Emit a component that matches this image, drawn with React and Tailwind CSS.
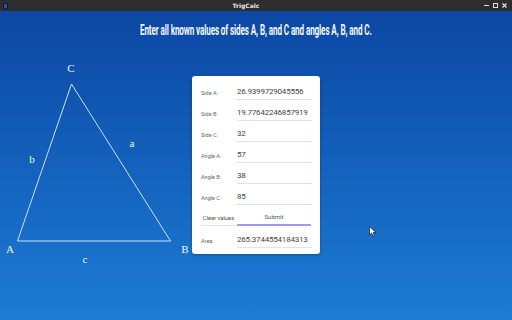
import React from "react";

const rows = [
  ["Side A:", "26.9399729045556"],
  ["Side B:", "19.77642246857919"],
  ["Side C:", "32"],
  ["Angle A:", "57"],
  ["Angle B:", "38"],
  ["Angle C:", "85"],
];

function Row({ label, value }) {
  return (
    <div className="flex items-end h-[21px]">
      <div className="w-[36px] text-[5.5px] leading-[7px] pb-[3px] text-[#666] whitespace-nowrap">{label}</div>
      <div className="w-[75px] border-b border-[#e3e3e3] text-[8px] leading-[10px] pb-[2px] text-[#444] tracking-[-0.2px] whitespace-nowrap overflow-hidden">{value}</div>
    </div>
  );
}

export default function App() {
  return (
    <div className="w-[512px] h-[320px] flex flex-col overflow-hidden" style={{ fontFamily: 'Roboto, "Noto Sans", sans-serif' }}>
      <div className="h-[11px] bg-[#2d2d2d] flex items-center px-[3px] relative">
        <div className="w-[5px] h-[6px] rounded-[1px] bg-[#1e4fbf] border border-[#101828]"></div>
        <div className="flex-1 text-center text-[6px] leading-[11px] font-bold text-[#e8e8e8]" style={{ fontFamily: '"DejaVu Sans", sans-serif' }}>TrigCalc</div>
        <div className="flex items-center gap-[4px] pr-[2px]">
          <div className="w-[5px] h-[5px] flex items-center"><div className="w-[5px] h-[1.5px] bg-[#ddd]"></div></div>
          <div className="w-[5px] h-[5px] border-[1.5px] border-[#ddd]"></div>
          <svg width="5" height="5" viewBox="0 0 5 5"><path d="M0.5 0.5L4.5 4.5M4.5 0.5L0.5 4.5" stroke="#ddd" strokeWidth="1.3" /></svg>
        </div>
      </div>
      <div className="flex-1 flex flex-col bg-gradient-to-b from-[#0c47a3] to-[#1d7cd5]">
        <div className="h-[49px] pt-[11px] flex justify-center">
          <div className="text-[14px] leading-[16px] font-bold text-[#f4f6fb] whitespace-nowrap scale-x-[0.58] tracking-[-0.2px]" style={{ fontFamily: 'Roboto, sans-serif' }}>
            Enter all known values of sides A, B, and C and angles A, B, and C.
          </div>
        </div>
        <div className="flex items-start">
          <svg width="192" height="210" viewBox="0 0 192 210" className="shrink-0" style={{ fontFamily: '"Liberation Serif", serif' }}>
            <path d="M17.5 181 L71.5 24 L170.5 181 Z" fill="none" stroke="#cfe0f7" strokeWidth="1" />
            <g fill="#f2f6fc" fontSize="11">
              <text x="71" y="12" textAnchor="middle">C</text>
              <text x="10" y="193" textAnchor="middle">A</text>
              <text x="185" y="193" textAnchor="middle">B</text>
              <text x="132" y="87" textAnchor="middle">a</text>
              <text x="32" y="103" textAnchor="middle">b</text>
              <text x="85" y="203" textAnchor="middle">c</text>
            </g>
          </svg>
          <div className="mt-[16px] w-[128px] h-[178px] bg-white rounded-[3px] shadow-[0_1px_3px_rgba(0,0,0,0.3)] pl-[9px] pr-[8px] pt-[3px] flex flex-col">
            {rows.map(([l, v]) => (
              <Row key={l} label={l} value={v} />
            ))}
            <div className="flex items-end h-[21px]">
              <div className="w-[35px] mr-[1px] border-b border-[#e3e3e3] text-[6px] leading-[8px] pb-[3px] text-[#555] text-center whitespace-nowrap tracking-[-0.1px]">Clear values</div>
              <div className="w-[74px] border-b-2 border-[#9b9bf2] text-[6px] leading-[8px] pb-[3px] text-[#555] text-center">Submit</div>
            </div>
            <div className="flex items-end h-[22px]">
              <div className="w-[36px] text-[5.5px] leading-[7px] pb-[3px] text-[#666]">Area:</div>
              <div className="w-[75px] border-b border-[#e3e3e3] text-[8px] leading-[10px] pb-[2px] text-[#444] tracking-[-0.2px] whitespace-nowrap">265.3744554184313</div>
            </div>
          </div>
          <div className="flex-1 relative">
            <svg width="8" height="11" viewBox="0 0 8 11" className="absolute left-[49px] top-[166px]">
              <path d="M0.5 0.5 L0.5 9 L2.6 7 L4 10.3 L5.4 9.7 L4.1 6.6 L7 6.6 Z" fill="#fff" stroke="#1a2a55" strokeWidth="0.8" />
            </svg>
          </div>
        </div>
      </div>
    </div>
  );
}
